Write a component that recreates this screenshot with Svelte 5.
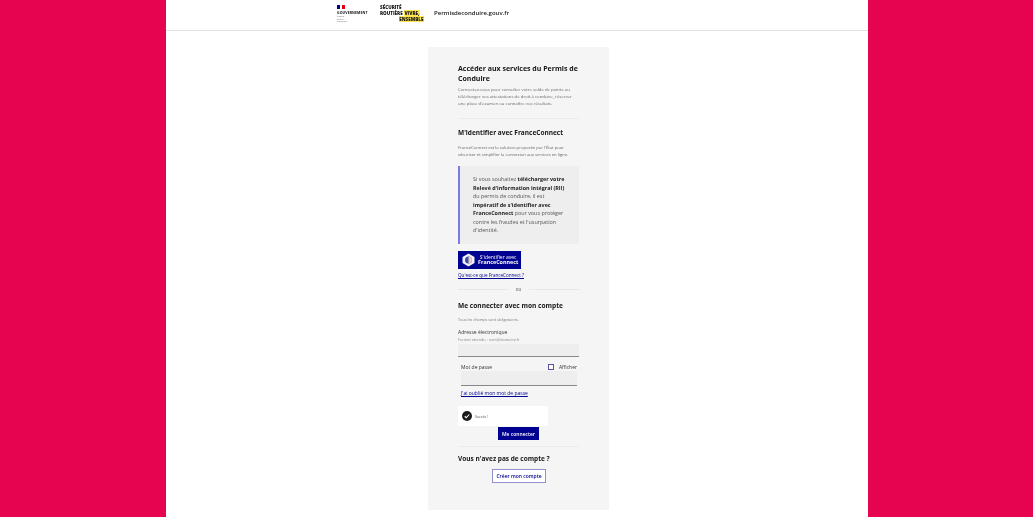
<script>
  const introText =
    "Connectez-vous pour consulter votre solde de points ou télécharger vos attestations de droit à conduire, réserver une place d'examen ou connaître vos résultats.";
  const fcText = "FranceConnect est la solution proposée par l'État pour sécuriser et simplifier la connexion aux services en ligne.";
</script>

<div class="page">
  <main class="sheet">
    <header class="top">
      <div class="gov">
        <div class="flag"><i class="blue"></i><i class="red"></i></div>
        <div class="gov-name">GOUVERNEMENT</div>
        <div class="gov-motto">Liberté<br />Égalité<br />Fraternité</div>
      </div>
      <div class="secu">
        <div class="secu-a">SÉCURITÉ</div>
        <div class="secu-b">ROUTIÈRE <mark>VIVRE,</mark></div>
        <div class="secu-c"><mark>ENSEMBLE</mark></div>
      </div>
      <div class="site">Permisdeconduire.gouv.fr</div>
    </header>

    <section class="card">
      <h1>Accéder aux services du Permis de Conduire</h1>
      <p class="intro">{introText}</p>
      <hr class="rule-a" />

      <h2>M'identifier avec FranceConnect</h2>
      <p class="fc-text">{fcText}</p>

      <div class="callout">
        Si vous souhaitez <b>télécharger votre Relevé d'information intégral (RII)</b> du permis de conduire, il est
        <b>impératif de s'identifier avec FranceConnect</b> pour vous protéger contre les fraudes et l'usurpation
        d'identité.
      </div>

      <button type="button" class="fc-btn">
        <svg width="13" height="14" viewBox="0 0 26 28" aria-hidden="true">
          <path d="M13 1 25 8v12l-12 7-12-7V8z" fill="#eef0f8" />
          <circle cx="13" cy="14" r="7" fill="#3d4aa8" />
          <path d="M13 7a7 7 0 0 1 0 14z" fill="#e9c7c4" />
        </svg>
        <span class="fc-label"><small>S'identifier avec</small><strong>FranceConnect</strong></span>
      </button>
      <a class="fc-link" href="#top">Qu'est-ce que FranceConnect ?</a>

      <div class="or"><span>ou</span></div>

      <h2 class="h-account">Me connecter avec mon compte</h2>
      <p class="required">Tous les champs sont obligatoires.</p>

      <div class="label">Adresse électronique</div>
      <div class="hint">Format attendu : nom@domaine.fr</div>
      <div class="input"></div>

      <div class="pw">
        <div class="pw-row">
          <span>Mot de passe</span>
          <span class="show"><i class="box"></i>Afficher</span>
        </div>
        <div class="input input-pw"></div>
        <a class="forgot" href="#top">J'ai oublié mon mot de passe</a>
      </div>

      <div class="captcha">
        <svg width="10" height="10" viewBox="0 0 20 20" aria-hidden="true">
          <circle cx="10" cy="10" r="10" fill="#1c1c1c" />
          <path d="M5.5 10.5l3 3 6-6.5" fill="none" stroke="#fff" stroke-width="2.2" />
        </svg>
        <span>Succès !</span>
      </div>
      <button type="button" class="login">Me connecter</button>
      <hr class="rule-b" />

      <h3>Vous n'avez pas de compte ?</h3>
      <button type="button" class="create">Créer mon compte</button>
    </section>
  </main>
</div>

<style>
  :global(body) {
    margin: 0;
    overflow: hidden;
    background: #e6034f;
  }

  .page {
    height: 517px;
    overflow: hidden;
    background: #e6034f;
    font-family: "Open Sans", "Liberation Sans", sans-serif;
    color: #161616;
  }

  .sheet {
    width: 702px;
    height: 517px;
    margin-left: 166px;
    background: #fff;
    filter: blur(0.45px);
  }

  .top {
    height: 31px;
    box-sizing: border-box;
    border-bottom: 1px solid #e2e2e2;
    display: flex;
    padding-left: 171px;
  }

  .gov {
    width: 43px;
    padding-top: 5px;
  }

  .flag {
    display: flex;
    gap: 2px;
  }

  .flag i {
    width: 3px;
    height: 4px;
    display: block;
  }

  .blue {
    background: #000091;
  }

  .red {
    background: #e1000f;
  }

  .gov-name {
    margin-top: 1px;
    font-size: 3.5px;
    line-height: 5px;
    font-weight: 700;
    letter-spacing: 0.1px;
  }

  .gov-motto {
    font-size: 2.2px;
    line-height: 2.6px;
    color: #666;
    margin-top: 1px;
  }

  .secu {
    width: 54px;
    padding-top: 4px;
    font-size: 4.6px;
    line-height: 6px;
    font-weight: 800;
    white-space: nowrap;
  }

  .secu mark {
    background: #ffe552;
    color: #161616;
    padding: 0 0.5px;
  }

  .secu-c {
    text-align: right;
    width: 44px;
  }

  .site {
    padding-top: 9px;
    font-size: 6px;
    line-height: 9px;
    font-weight: 600;
    white-space: nowrap;
  }

  .card {
    width: 181px;
    height: 463px;
    box-sizing: border-box;
    margin: 16px 0 0 262px;
    padding: 17px 30px 0;
    background: #f5f5f5;
  }

  h1 {
    margin: 0;
    font-size: 7px;
    line-height: 10px;
    font-weight: 700;
  }

  .intro {
    margin: 2px 0 0;
    font-size: 4.3px;
    line-height: 7px;
    color: #666;
  }

  hr {
    border: 0;
    border-top: 1px solid #ebebeb;
  }

  .rule-a {
    margin: 11px 0 0;
  }

  h2 {
    margin: 9px 0 0;
    font-size: 6.5px;
    line-height: 10px;
    font-weight: 700;
    white-space: nowrap;
  }

  .fc-text {
    margin: 6px 0 0;
    font-size: 4.2px;
    line-height: 7px;
    color: #666;
  }

  .callout {
    margin-top: 8px;
    height: 78px;
    box-sizing: border-box;
    padding: 9px 8px 0 13px;
    border-left: 2px solid #7a7ae8;
    background: #eeeeee;
    font-size: 5.4px;
    line-height: 8.5px;
    color: #555;
  }

  .callout b {
    color: #222;
  }

  .fc-btn {
    display: flex;
    align-items: center;
    gap: 3px;
    width: 63px;
    height: 18px;
    margin-top: 7px;
    padding: 0 0 0 4px;
    border: 0;
    background: #000091;
    color: #fff;
    font-family: inherit;
  }

  .fc-label {
    display: flex;
    flex-direction: column;
    align-items: center;
    line-height: 5.5px;
  }

  .fc-label small {
    font-size: 5px;
  }

  .fc-label strong {
    font-size: 5.4px;
    font-weight: 700;
  }

  .fc-link {
    display: block;
    margin-top: 3px;
    font-size: 4.6px;
    line-height: 6px;
    color: #000091;
  }

  .or {
    display: flex;
    align-items: center;
    gap: 8px;
    margin-top: 8px;
    font-size: 4.5px;
    line-height: 6px;
    color: #555;
  }

  .or::before,
  .or::after {
    content: "";
    flex: 1;
    border-top: 1px solid #e8e8e8;
  }

  .h-account {
    margin-top: 9px;
    font-size: 6.6px;
  }

  .required {
    margin: 6px 0 0;
    font-size: 3.8px;
    line-height: 5px;
    color: #777;
  }

  .label {
    margin-top: 7px;
    font-size: 5px;
    line-height: 7px;
    color: #333;
  }

  .hint {
    margin-top: 1px;
    font-size: 3.8px;
    line-height: 5px;
    color: #888;
  }

  .input {
    height: 12px;
    margin-top: 2px;
    background: #eeeeee;
    border-bottom: 1px solid #888;
  }

  .pw {
    padding: 6px 2px 0 3px;
  }

  .pw-row {
    display: flex;
    justify-content: space-between;
    font-size: 5px;
    line-height: 8px;
    color: #333;
  }

  .show {
    display: flex;
    align-items: center;
    gap: 5px;
  }

  .box {
    display: block;
    width: 4px;
    height: 4px;
    border: 0.7px solid #5555aa;
    background: #fff;
  }

  .input-pw {
    margin-top: 0;
    height: 14px;
  }

  .forgot {
    display: block;
    margin-top: 4px;
    font-size: 5px;
    line-height: 7px;
    color: #000091;
  }

  .captcha {
    display: flex;
    align-items: center;
    gap: 3px;
    width: 86px;
    height: 20px;
    margin-top: 9px;
    padding-left: 4px;
    background: #fff;
    font-size: 3.5px;
    color: #555;
  }

  .login {
    display: block;
    width: 41px;
    height: 13px;
    margin: 1px 0 0 40px;
    padding: 0;
    border: 0;
    background: #000091;
    color: #fff;
    font-family: inherit;
    font-size: 5px;
    font-weight: 600;
  }

  .rule-b {
    margin: 6px 0 0;
  }

  h3 {
    margin: 7px 0 0;
    font-size: 6.5px;
    line-height: 10px;
    font-weight: 700;
    white-space: nowrap;
  }

  .create {
    display: block;
    width: 54px;
    height: 14px;
    margin: 5px 0 0 34px;
    padding: 0;
    border: 1px solid #9090cc;
    outline: 0;
    background: #fff;
    color: #000091;
    font-family: inherit;
    font-size: 5px;
    font-weight: 600;
  }
</style>
